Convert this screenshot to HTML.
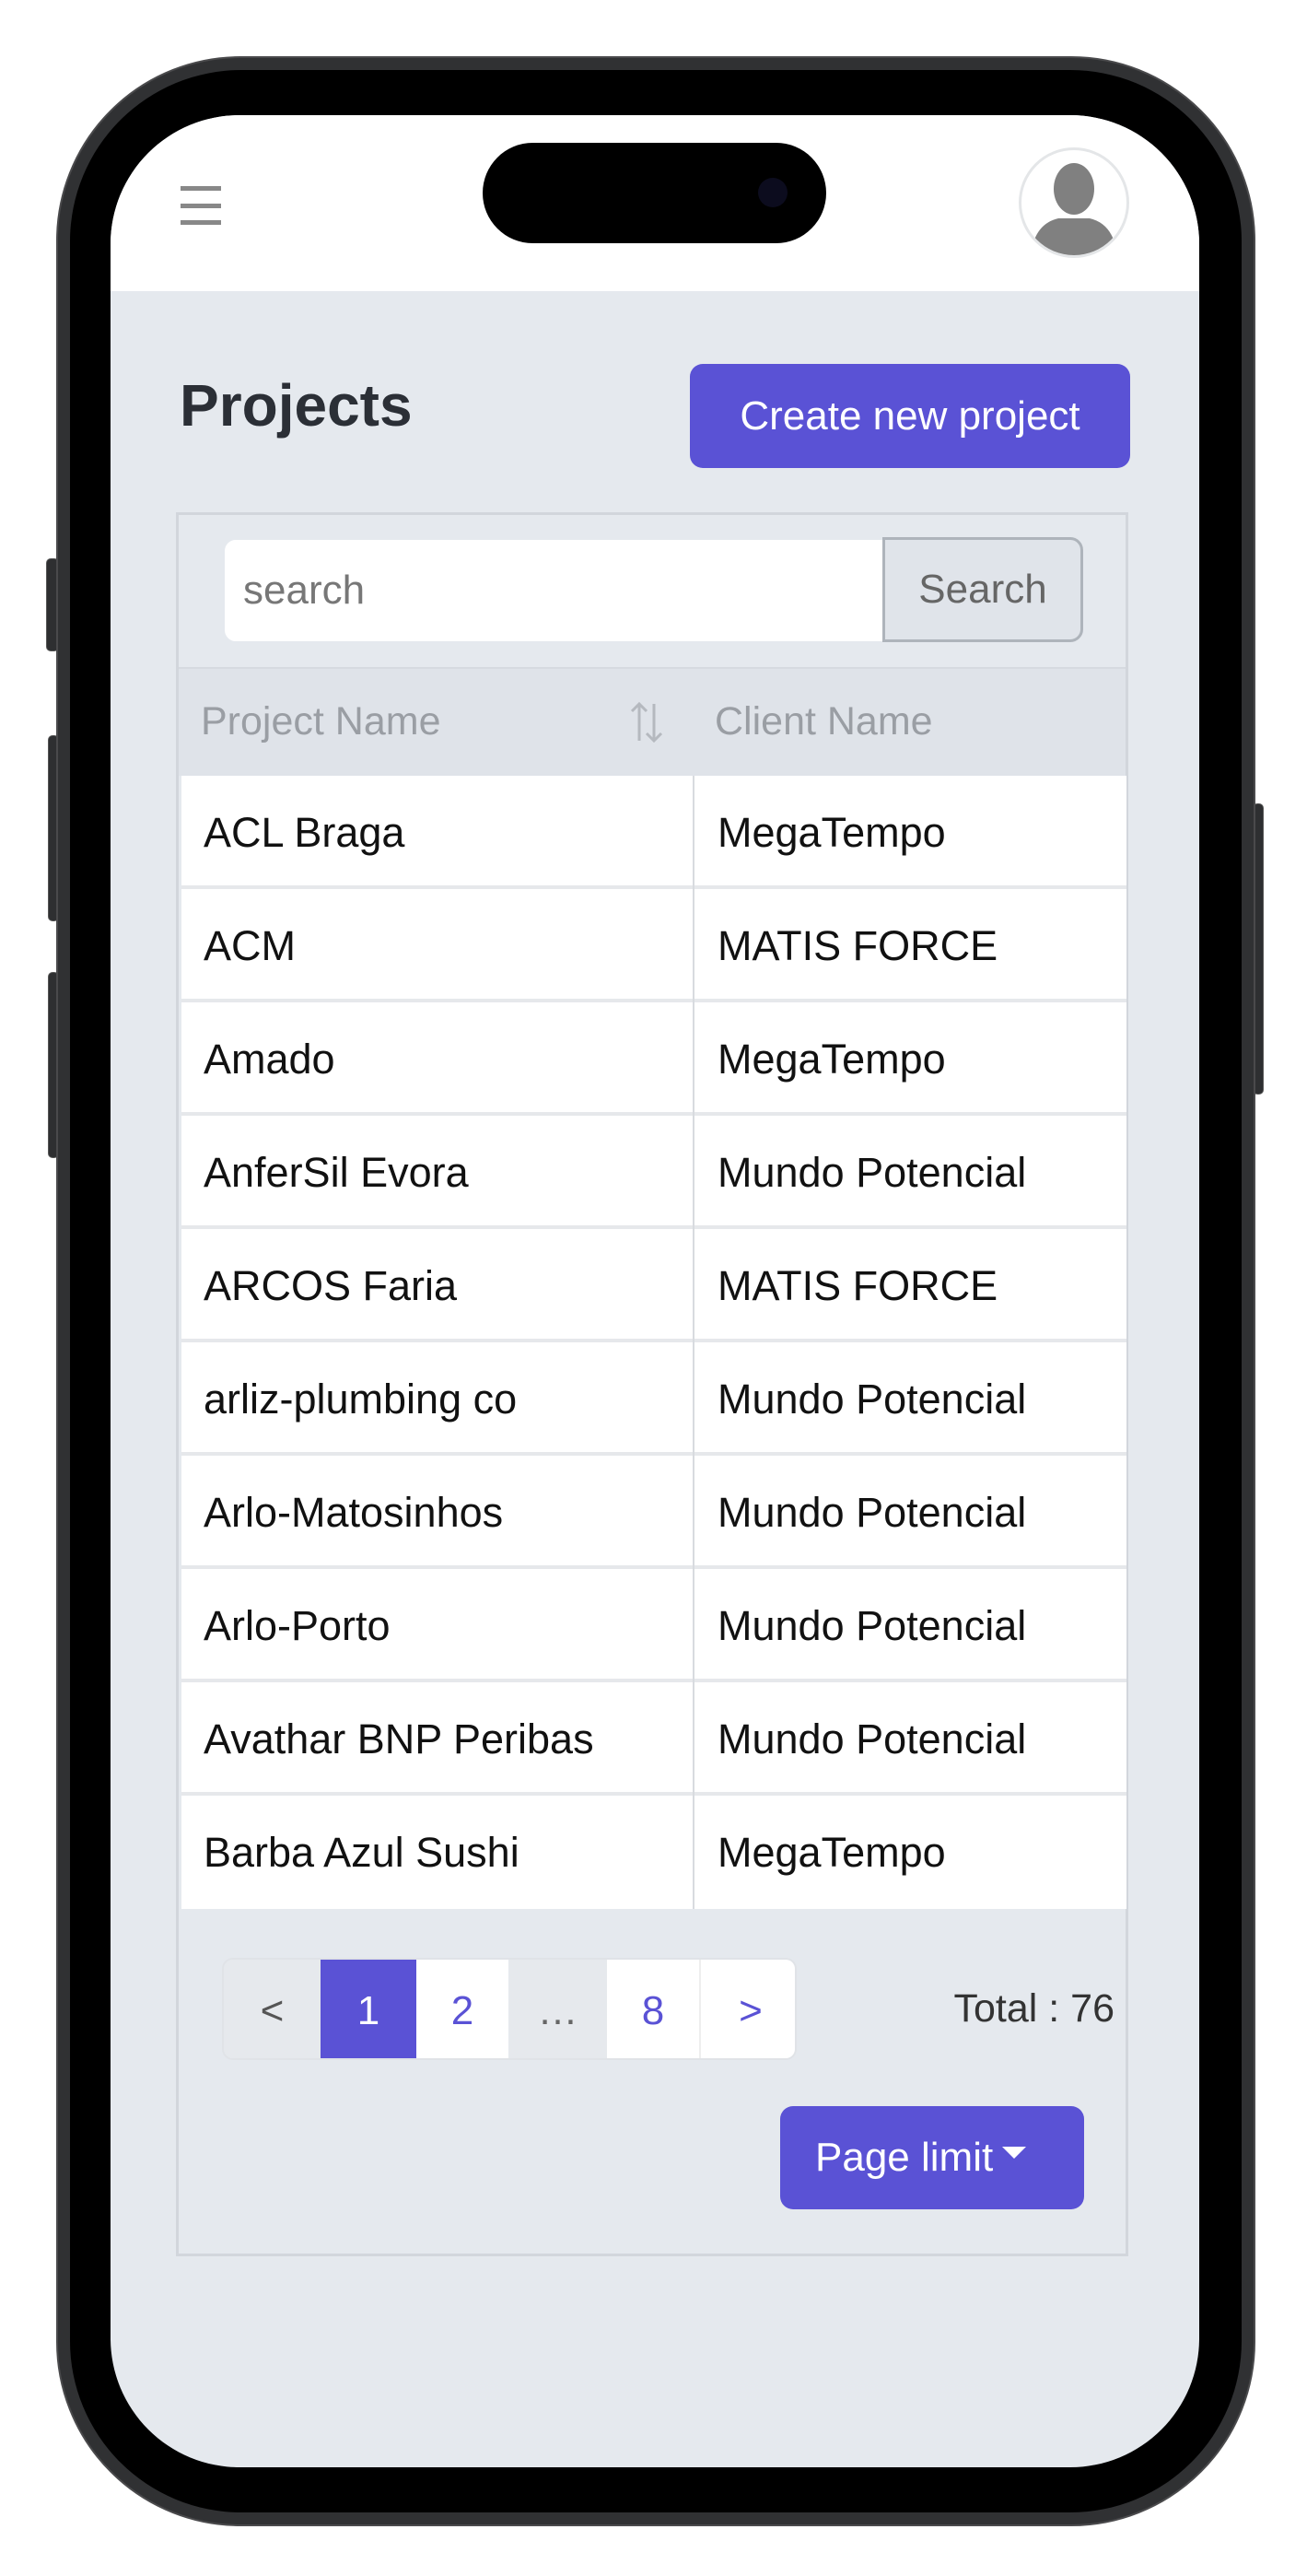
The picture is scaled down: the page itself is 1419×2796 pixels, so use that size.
<!DOCTYPE html>
<html><head><meta charset="utf-8"><style>
*{margin:0;padding:0;box-sizing:border-box}
body{width:1419px;height:2796px;background:#fff;position:relative;overflow:hidden;font-family:"Liberation Sans",sans-serif}
.abs{position:absolute}
.btnside{position:absolute;background:#2e2f31;border-radius:5px;border:1px solid #555}
.frame{left:61px;top:61px;width:1302px;height:2681px;border-radius:200px;background:#303133;border:2px solid #4a4a4c}
.bezel{left:76px;top:76px;width:1272px;height:2651px;border-radius:186px;background:#000}
.screen{left:120px;top:125px;width:1182px;height:2553px;border-radius:140px;background:#e5e9ee;overflow:hidden}
.row{position:absolute;left:3px;width:1026px;height:123px;background:#fff;border-bottom:4px solid #e6e8eb}
.row span{position:absolute;top:0;line-height:123px;font-size:45px;color:#111}
.c1{left:24px}.c2{left:582px}
.pg{position:absolute;top:0;height:111px;line-height:111px;text-align:center;font-size:44px;color:#5a52d5;background:#fff}
</style></head><body>
<div class="btnside" style="left:50px;top:606px;width:14px;height:101px"></div>
<div class="btnside" style="left:52px;top:798px;width:12px;height:202px"></div>
<div class="btnside" style="left:52px;top:1055px;width:12px;height:202px"></div>
<div class="btnside" style="left:1360px;top:872px;width:12px;height:316px"></div>
<div class="abs frame"></div>
<div class="abs bezel"></div>
<div class="abs screen">
  <div class="abs" style="left:0;top:0;width:1182px;height:191px;background:#fff"></div>
  <div class="abs" style="left:76px;top:77px;width:44px;height:5px;background:#888"></div>
  <div class="abs" style="left:76px;top:96px;width:44px;height:5px;background:#888"></div>
  <div class="abs" style="left:76px;top:114px;width:44px;height:5px;background:#888"></div>
  <div class="abs" style="left:986px;top:35px;width:120px;height:120px;border-radius:50%;background:#fff;border:3px solid #e4e6e8;overflow:hidden">
    <svg width="114" height="114" viewBox="0 0 114 114"><ellipse cx="57" cy="42" rx="22" ry="28" fill="#808080"/><path d="M10 114 Q14 80 40 74 L74 74 Q100 80 104 114Z" fill="#808080"/></svg>
  </div>
  <div class="abs" style="left:404px;top:30px;width:373px;height:109px;border-radius:55px;background:#000"></div>
  <div class="abs" style="left:703px;top:68px;width:32px;height:32px;border-radius:50%;background:#0c0c1e"></div>
  <div class="abs" style="left:75px;top:280px;font-size:64px;font-weight:bold;color:#2b2f36;line-height:70px">Projects</div>
  <div class="abs" style="left:629px;top:270px;width:478px;height:113px;border-radius:14px;background:#5a52d5;color:#fff;font-size:44px;line-height:113px;text-align:center">Create new project</div>
  <div class="abs" style="left:71px;top:431px;width:1034px;height:1893px;border:3px solid #d2d6dc;background:#e5e9ee">
    <div class="abs" style="left:50px;top:27px;width:717px;height:110px;background:#fff;border-radius:12px 0 0 12px"></div>
    <div class="abs" style="left:70px;top:27px;line-height:110px;font-size:44px;color:#777">search</div>
    <div class="abs" style="left:764px;top:24px;width:218px;height:114px;border:3px solid #aeb4bb;border-radius:0 14px 14px 0;background:#e0e4ea;font-size:44px;color:#666;line-height:108px;text-align:center">Search</div>
    <div class="abs" style="left:0;top:165px;width:1028px;height:118px;background:#dfe3e9;border-top:2px solid #d6dae0"></div>
    <div class="abs" style="left:24px;top:165px;line-height:118px;font-size:43px;color:#9a9ea4">Project Name</div>
    <div class="abs" style="left:582px;top:165px;line-height:118px;font-size:43px;color:#9a9ea4">Client Name</div>
    <svg class="abs" style="left:486px;top:200px" width="44" height="50" viewBox="0 0 44 50"><path d="M14 45 V5 M6 13 L14 5 L22 13 M30 5 V45 M22 37 L30 45 L38 37" stroke="#b5b9bf" stroke-width="3" fill="none"/></svg>
    <div class="row" style="top:283px"><span class="c1">ACL Braga</span><span class="c2">MegaTempo</span></div>
    <div class="row" style="top:406px"><span class="c1">ACM</span><span class="c2">MATIS FORCE</span></div>
    <div class="row" style="top:529px"><span class="c1">Amado</span><span class="c2">MegaTempo</span></div>
    <div class="row" style="top:652px"><span class="c1">AnferSil Evora</span><span class="c2">Mundo Potencial</span></div>
    <div class="row" style="top:775px"><span class="c1">ARCOS Faria</span><span class="c2">MATIS FORCE</span></div>
    <div class="row" style="top:898px"><span class="c1">arliz-plumbing co</span><span class="c2">Mundo Potencial</span></div>
    <div class="row" style="top:1021px"><span class="c1">Arlo-Matosinhos</span><span class="c2">Mundo Potencial</span></div>
    <div class="row" style="top:1144px"><span class="c1">Arlo-Porto</span><span class="c2">Mundo Potencial</span></div>
    <div class="row" style="top:1267px"><span class="c1">Avathar BNP Peribas</span><span class="c2">Mundo Potencial</span></div>
    <div class="row" style="top:1390px;border-bottom:none"><span class="c1">Barba Azul Sushi</span><span class="c2">MegaTempo</span></div>
    <div class="abs" style="left:558px;top:283px;width:2px;height:1230px;background:#d8dbdf"></div>
    <div class="abs" style="left:47px;top:1566px;width:624px;height:111px;border-radius:12px;overflow:hidden;border:2px solid #e0e3e7">
      <div class="pg" style="left:0;width:105px;background:#e6e9ed;color:#555">&lt;</div>
      <div class="pg" style="left:105px;width:104px;background:#5a52d5;color:#fff">1</div>
      <div class="pg" style="left:209px;width:100px">2</div>
      <div class="pg" style="left:309px;width:107px;background:#e6e9ed;color:#666">…</div>
      <div class="pg" style="left:416px;width:100px">8</div>
      <div class="pg" style="left:516px;width:110px;border-left:2px solid #eee">&gt;</div>
    </div>
    <div class="abs" style="right:12px;top:1566px;line-height:111px;font-size:43px;color:#333">Total : 76</div>
    <div class="abs" style="left:653px;top:1727px;width:330px;height:112px;border-radius:14px;background:#5a52d5;color:#fff;font-size:44px;line-height:112px;padding-left:38px">Page limit<span style="display:inline-block;margin-left:10px;width:0;height:0;border-left:13px solid transparent;border-right:13px solid transparent;border-top:13px solid #fff;vertical-align:middle;position:relative;top:-8px"></span></div>
  </div>
</div>
</body></html>
